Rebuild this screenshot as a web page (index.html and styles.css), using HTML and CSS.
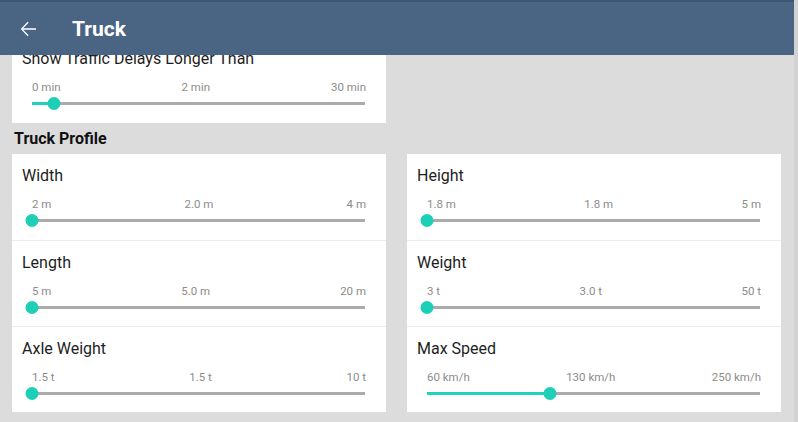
FILE: index.html
```html
<!DOCTYPE html>
<html>
<head>
<meta charset="utf-8">
<link rel="stylesheet" href="styles.css">
</head>
<body>
<div class="app">
  <header class="appbar">
    <svg class="back" viewBox="0 0 24 24" width="24" height="24"><path d="M20 11.2H7.2l5.4-5.4-1-1L4.8 12l6.8 7.2 1-1-5.4-5.4H20z" fill="#fff"/></svg>
    <h1 class="title">Truck</h1>
  </header>
  <main class="content">
    <div class="scroll">
      <div class="col-half">
        <section class="card">
          <div class="row">
            <div class="row-title">Show Traffic Delays Longer Than</div>
            <div class="labels"><span>0 min</span><span>2 min</span><span>30 min</span></div>
            <div class="slider"><div class="track"></div><div class="fill" style="width:6.7%"></div><div class="thumb" style="left:6.7%"></div></div>
          </div>
        </section>
      </div>
      <h2 class="section">Truck Profile</h2>
      <div class="grid">
        <section class="card">
          <div class="row">
            <div class="row-title">Width</div>
            <div class="labels"><span>2 m</span><span>2.0 m</span><span>4 m</span></div>
            <div class="slider"><div class="track"></div><div class="thumb" style="left:0%"></div></div>
          </div>
          <div class="row">
            <div class="row-title">Length</div>
            <div class="labels"><span>5 m</span><span>5.0 m</span><span>20 m</span></div>
            <div class="slider"><div class="track"></div><div class="thumb" style="left:0%"></div></div>
          </div>
          <div class="row">
            <div class="row-title">Axle Weight</div>
            <div class="labels"><span>1.5 t</span><span>1.5 t</span><span>10 t</span></div>
            <div class="slider"><div class="track"></div><div class="thumb" style="left:0%"></div></div>
          </div>
        </section>
        <section class="card">
          <div class="row">
            <div class="row-title">Height</div>
            <div class="labels"><span>1.8 m</span><span>1.8 m</span><span>5 m</span></div>
            <div class="slider"><div class="track"></div><div class="thumb" style="left:0%"></div></div>
          </div>
          <div class="row">
            <div class="row-title">Weight</div>
            <div class="labels"><span>3 t</span><span>3.0 t</span><span>50 t</span></div>
            <div class="slider"><div class="track"></div><div class="thumb" style="left:0%"></div></div>
          </div>
          <div class="row">
            <div class="row-title">Max Speed</div>
            <div class="labels"><span>60 km/h</span><span>130 km/h</span><span>250 km/h</span></div>
            <div class="slider"><div class="track"></div><div class="fill" style="width:36.8%"></div><div class="thumb" style="left:36.8%"></div></div>
          </div>
        </section>
      </div>
    </div>
  </main>
</div>
</body>
</html>
```

FILE: styles.css
```css
* { box-sizing: border-box; }
html, body { margin: 0; padding: 0; }
body {
  width: 798px;
  height: 422px;
  overflow: hidden;
  background: #dcdcdc;
  font-family: Roboto, "Noto Sans", "Liberation Sans", sans-serif;
}
.app {
  display: flex;
  flex-direction: column;
  height: 422px;
  border-right: 4px solid #d2d2d2;
}
.appbar {
  flex: 0 0 55px;
  display: flex;
  align-items: center;
  background: #4a6484;
  border-top: 2px solid #3f5672;
  padding-left: 16px;
  position: relative;
  z-index: 2;
}
.back { display: block; }
.title {
  margin: 0 0 0 32px;
  color: #fff;
  font-size: 21px;
  font-weight: 700;
  line-height: 24px;
}
.content {
  flex: 1;
  overflow: hidden;
}
.scroll {
  margin-top: -18px;
  padding: 0 13px 0 12px;
}
.col-half { width: 374px; }
.card {
  background: #fff;
}
.row {
  height: 86px;
  padding: 12px 0 0 0;
  border-top: 1px solid #ececec;
}
.row:first-child { border-top: 0; }
.row-title {
  padding-left: 10px;
  font-size: 16px;
  line-height: 20px;
  color: #1e1e1e;
}
.labels {
  display: flex;
  justify-content: space-between;
  margin: 11px 20px 0 20px;
  font-size: 11.5px;
  line-height: 15px;
  color: #8c8c8c;
}
.slider {
  position: relative;
  height: 13px;
  margin: 2px 21px 0 20px;
}
.track {
  position: absolute;
  left: 0;
  right: 0;
  top: 5px;
  height: 3px;
  background: #ababab;
}
.fill {
  position: absolute;
  left: 0;
  top: 5px;
  height: 3px;
  background: #22d1ba;
}
.thumb {
  position: absolute;
  top: 0;
  width: 13px;
  height: 13px;
  border-radius: 50%;
  background: #1ecfb8;
  transform: translateX(-50%);
}
.section {
  margin: 0;
  padding-left: 2px;
  height: 31px;
  font-size: 16px;
  font-weight: 700;
  line-height: 31px;
  color: #111;
}
.grid {
  display: grid;
  grid-template-columns: 374px 374px;
  column-gap: 21px;
}
```
